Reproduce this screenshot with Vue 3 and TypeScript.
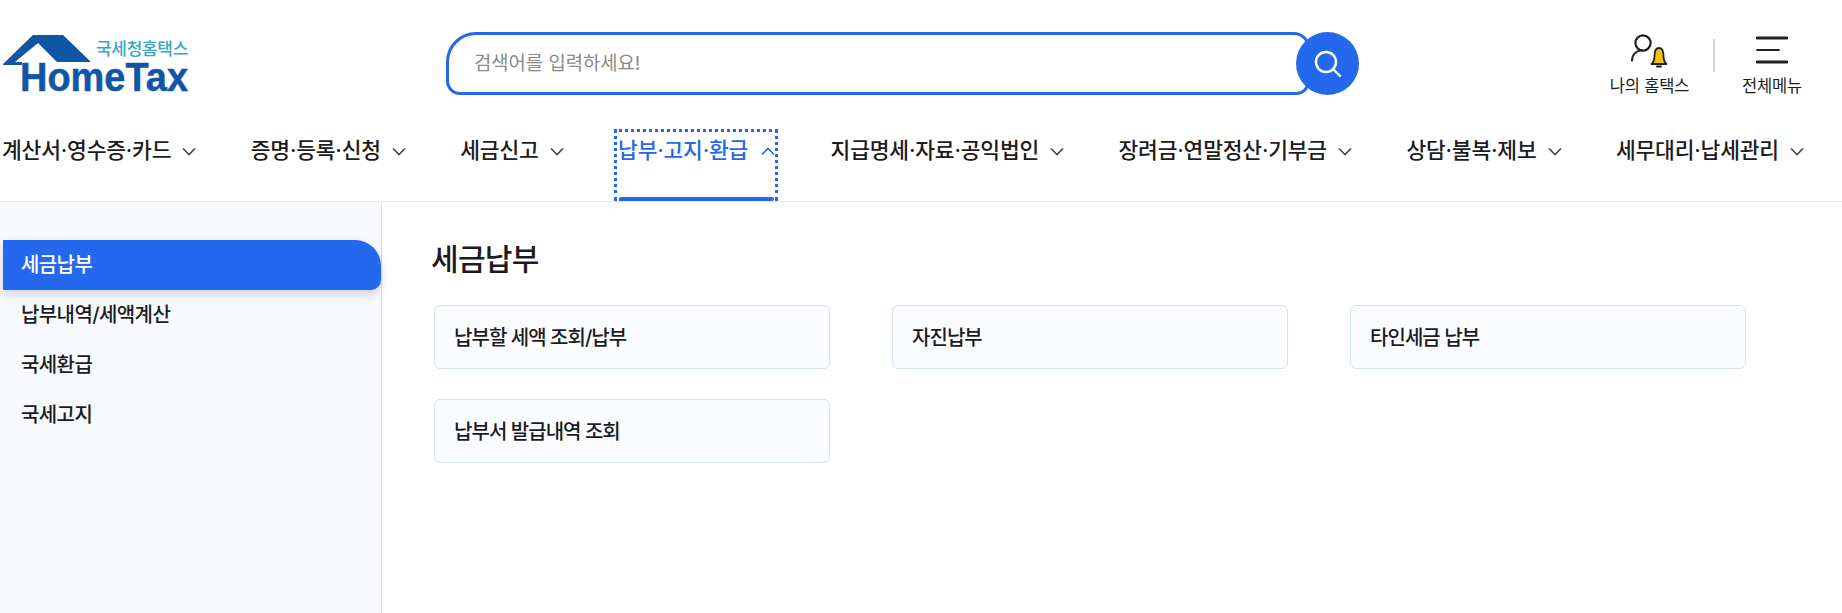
<script setup lang="ts">
const navItems: { label: string; active?: boolean }[] = [
  { label: '계산서·영수증·카드' },
  { label: '증명·등록·신청' },
  { label: '세금신고' },
  { label: '납부·고지·환급', active: true },
  { label: '지급명세·자료·공익법인' },
  { label: '장려금·연말정산·기부금' },
  { label: '상담·불복·제보' },
  { label: '세무대리·납세관리' },
]
const sideItems = ['세금납부', '납부내역/세액계산', '국세환급', '국세고지']
const cards = ['납부할 세액 조회/납부', '자진납부', '타인세금 납부', '납부서 발급내역 조회']
</script>

<template>
  <div class="page">
    <header class="header">
      <div class="top">
        <a class="logo" aria-label="국세청 홈택스">
          <svg width="190" height="70" viewBox="0 0 190 70">
            <path d="M3 36 L33 7 H63 L91 34 H57 L38 15 L15 34 H22 V37 H3 Z" fill="#0f56a5" />
            <text x="96" y="27" class="logo-ko">국세청홈택스</text>
            <text x="20" y="63" class="logo-en" textLength="168" lengthAdjust="spacingAndGlyphs">HomeTax</text>
          </svg>
        </a>
        <div class="search">
          <div class="search-box">검색어를 입력하세요!</div>
          <button class="search-btn" aria-label="검색">
            <svg width="30" height="30" viewBox="0 0 30 30" fill="none" stroke="#fff" stroke-width="2.4">
              <circle cx="13" cy="13" r="10" />
              <path d="M20.5 20.5 L27 27" stroke-linecap="round" />
            </svg>
          </button>
        </div>
        <div class="utils">
          <div class="util my">
            <svg width="42" height="38" viewBox="0 0 42 38" fill="none">
              <circle cx="14" cy="12" r="7.6" stroke="#222" stroke-width="2.2" />
              <path d="M3 29.5 C3 24 7 20 12.5 19" stroke="#222" stroke-width="2.2" stroke-linecap="round" />
              <path d="M22.5 33 C25 31 25.5 29 25.5 25 C25.5 20 27 17 30 17 C33 17 34.5 20 34.5 25 C34.5 29 35 31 37.5 33 Z" fill="#f5c400" stroke="#222" stroke-width="1.8" stroke-linejoin="round" />
              <path d="M28 35.5 H32" stroke="#222" stroke-width="2" stroke-linecap="round" />
            </svg>
            <span>나의 홈택스</span>
          </div>
          <div class="sep"></div>
          <div class="util all">
            <svg width="32" height="30" viewBox="0 0 32 30" fill="none" stroke="#222" stroke-linecap="round">
              <path d="M1 3 H31" stroke-width="2.8" />
              <path d="M1 15 H23" stroke-width="1.8" />
              <path d="M1 27 H31" stroke-width="2.8" />
            </svg>
            <span>전체메뉴</span>
          </div>
        </div>
      </div>
      <nav class="nav">
        <a v-for="item in navItems" :key="item.label" class="nav-item" :class="{ active: item.active }">
          <span>{{ item.label }}</span>
          <svg width="14" height="9" viewBox="0 0 14 9" fill="none" stroke="currentColor" stroke-width="1.6" :class="{ up: item.active }">
            <path d="M1 1.5 L7 7.5 L13 1.5" />
          </svg>
        </a>
      </nav>
    </header>
    <div class="body">
      <aside class="side">
        <ul>
          <li v-for="(s, i) in sideItems" :key="s" :class="{ on: i === 0 }">{{ s }}</li>
        </ul>
      </aside>
      <main class="main">
        <h1>세금납부</h1>
        <div class="cards">
          <a v-for="c in cards" :key="c" class="card">{{ c }}</a>
        </div>
      </main>
    </div>
  </div>
</template>

<style>
html, body { margin: 0; background: #fff; }
</style>

<style scoped>
.page {
  width: 1842px;
  height: 613px;
  overflow: hidden;
  display: flex;
  flex-direction: column;
  font-family: Inter, "Noto Sans CJK KR", sans-serif;
  color: #1c1c1c;
}
.header { height: 201px; border-bottom: 1px solid #e9ebef; flex: none; }
.top { height: 129px; display: flex; align-items: flex-start; }
.logo { margin-top: 28px; width: 190px; height: 70px; flex: none; display: block; }
.logo svg { display: block; }
.logo-ko { font-size: 17px; font-weight: 500; fill: #35a7c4; font-family: "Noto Sans CJK KR", sans-serif; letter-spacing: -0.3px; }
.logo-en { font-size: 40px; font-weight: 700; fill: #0f56a5; stroke: #0f56a5; stroke-width: 0.5px; font-family: "Liberation Sans", sans-serif; }
.search { margin: 32px 0 0 256px; width: 913px; height: 63px; display: flex; align-items: center; flex: none; }
.search-box {
  width: 864px;
  height: 63px;
  box-sizing: border-box;
  border: 3px solid #2468ee;
  border-radius: 30px 16px 14px 14px;
  padding-left: 25px;
  font-size: 18.8px;
  line-height: 57px;
  color: #8a8a8a;
  background: #fff;
  flex: none;
}
.search-btn {
  width: 63px;
  height: 63px;
  border-radius: 50%;
  border: 0;
  padding: 0;
  margin-left: -14px;
  background: #2468ee;
  display: flex;
  align-items: center;
  justify-content: center;
  flex: none;
  position: relative;
}
.utils { margin-left: 250px; margin-top: 31px; display: flex; align-items: flex-start; }
.util { display: flex; flex-direction: column; align-items: center; font-size: 16.5px; line-height: 20px; white-space: nowrap; letter-spacing: -0.2px; }
.util svg { display: block; height: 38px; margin-bottom: 7px; }
.my { width: 81px; }
.all { width: 60px; }
.sep { width: 2px; height: 33px; background: #d3d5dc; margin: 8px 27px 0 23px; }
.nav { height: 72px; display: flex; justify-content: space-between; padding: 0 36px 0 0; margin-left: -2px; }
.nav-item {
  position: relative;
  height: 72px;
  display: flex;
  align-items: flex-start;
  gap: 11px;
  padding: 7px 2px 0 4px;
  box-sizing: border-box;
  font-size: 21.5px;
  line-height: 28px;
  font-weight: 500;
  letter-spacing: -0.2px;
  white-space: nowrap;
}
.nav-item svg { margin-top: 11px; color: #444; }
.nav-item svg.up { transform: rotate(180deg); color: #2468ee; }
.nav-item.active { color: #2468ee; gap: 13px; padding-right: 3px; outline: 3px dotted #2468ee; outline-offset: -3px; }
.nav-item.active::after {
  content: "";
  position: absolute;
  left: 5px;
  right: 4px;
  bottom: 0;
  height: 4px;
  border-radius: 2px;
  background: #2468ee;
}
.body { flex: 1; display: flex; min-height: 0; }
.side { width: 378px; flex: none; background: #f8f9fd; border-right: 1px solid #d5e0f5; padding: 38px 0 0 3px; }
.side ul { list-style: none; margin: 0; padding: 0; }
.side li {
  height: 50px;
  line-height: 50px;
  padding-left: 18px;
  font-size: 20px;
  font-weight: 500;
  letter-spacing: -0.6px;
}
.side li.on {
  background: #2468ee;
  color: #fff;
  border-radius: 0 26px 10px 0;
  box-shadow: 0 4px 10px rgba(40, 60, 110, 0.2);
}
.main { flex: 1; padding: 37px 0 0 49px; }
.main h1 { margin: 0; font-size: 30px; line-height: 40px; font-weight: 500; letter-spacing: -0.7px; }
.cards { margin-top: 26px; margin-left: 3px; display: grid; grid-template-columns: repeat(3, 396px); column-gap: 62px; row-gap: 30px; }
.card {
  height: 64px;
  box-sizing: border-box;
  border: 1px solid #d5e1fb;
  border-radius: 6px;
  background: #fbfcff;
  padding-left: 19px;
  line-height: 64px;
  font-size: 20px;
  font-weight: 500;
  letter-spacing: -0.95px;
}
</style>
